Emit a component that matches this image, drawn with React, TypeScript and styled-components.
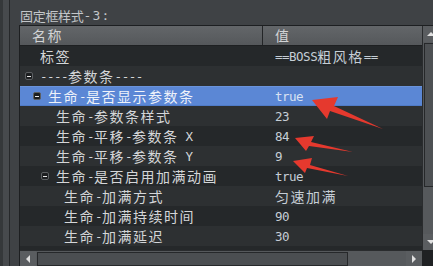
import React from 'react';
import styled, { createGlobalStyle } from 'styled-components';

const Global = createGlobalStyle`
  html, body { margin: 0; padding: 0; background: #3f4245; overflow: hidden; }
  body { font-family: "DejaVu Sans Mono", "Noto Sans CJK SC", monospace; }
`;

const CJK_RE = /([\u2e80-\u9fff\uff00-\uffef]+)/;

const Cjk = styled.span<{ $size: number; $ls: number }>`
  font-family: "Noto Sans CJK SC", sans-serif;
  font-size: ${p => p.$size}px;
  letter-spacing: ${p => p.$ls}px;
`;

const Lat = styled.span<{ $size: number; $ls: number }>`
  font-family: "DejaVu Sans Mono", monospace;
  font-size: ${p => p.$size}px;
  letter-spacing: ${p => p.$ls}px;
  white-space: pre;
`;

type MixedProps = { text: string; cjkSize?: number; cjkLs?: number; latSize?: number; latLs?: number };

function Mixed({ text, cjkSize = 14, cjkLs = 1.5, latSize = 12.5, latLs = -0.5 }: MixedProps) {
  const parts = text.split(CJK_RE).filter(Boolean);
  return (
    <>
      {parts.map((p, i) =>
        CJK_RE.test(p) ? (
          <Cjk key={i} $size={cjkSize} $ls={cjkLs}>{p}</Cjk>
        ) : (
          <Lat key={i} $size={latSize} $ls={latLs}>{p}</Lat>
        )
      )}
    </>
  );
}

const Page = styled.div`
  position: relative;
  display: flex;
  width: 433px;
  height: 266px;
  overflow: hidden;
`;

const LeftStrip = styled.div`
  flex: 0 0 auto;
  width: 6px;
  border-left: 3px solid #35383a;
  border-right: 1px solid #26282a;
  background: #474a4d;
`;

const Main = styled.div`
  flex: 1 1 auto;
  display: flex;
  flex-direction: column;
  padding-left: 9px;
`;

const Title = styled.div`
  height: 28px;
  padding-left: 1px;
  box-sizing: border-box;
  display: flex;
  align-items: center;
  padding-top: 6px;
  color: #c3c6c9;
  white-space: nowrap;
`;

const Table = styled.div`
  width: 418px;
  border: 1px solid #1d1f21;
  display: grid;
  grid-template-columns: 402px 16px;
  grid-template-rows: 20px 204px 16px;
`;

const Header = styled.div`
  grid-column: 1;
  grid-row: 1;
  display: flex;
  height: 20px;
  box-sizing: border-box;
  border-bottom: 1px solid #1e2022;
  background: linear-gradient(#636669, #55585b);
  color: #d2d4d6;
`;

const HeadCell = styled.div<{ $w?: number }>`
  ${p => (p.$w ? `width: ${p.$w}px; border-right: 1px solid #232527;` : 'flex: 1;')}
  box-sizing: border-box;
  padding-left: 12px;
  display: flex;
  align-items: center;
  line-height: 19px;
`;

const Body = styled.div`
  grid-column: 1;
  grid-row: 2;
  overflow: hidden;
`;

const Row = styled.div<{ $alt: boolean; $sel: boolean }>`
  display: flex;
  height: 20px;
  box-sizing: border-box;
  background: ${p => (p.$sel ? '#5b87d5' : p.$alt ? '#2d3032' : '#25282a')};
  ${p => p.$sel && 'border-top: 1px solid #6a93da; border-bottom: 1px solid #4f7bc8;'}
  color: ${p => (p.$sel ? '#eef2fa' : '#d4d6d8')};
  white-space: nowrap;
`;

const NameCell = styled.div<{ $level: number }>`
  width: 242px;
  flex: 0 0 auto;
  box-sizing: border-box;
  padding-left: ${p => 5 + p.$level * 8}px;
  display: flex;
  align-items: center;
  overflow: hidden;
`;

const IconSlot = styled.span`
  width: 15px;
  flex: 0 0 auto;
  display: flex;
  align-items: center;
`;

const Toggle = styled.span`
  position: relative;
  width: 8px;
  height: 8px;
  box-sizing: border-box;
  border: 1px solid #5c5f62;
  border-radius: 2px;
  background: #1c1e20;
  &::after {
    content: '';
    position: absolute;
    left: 1px;
    right: 1px;
    top: 2.5px;
    height: 1px;
    background: #e8e8e8;
  }
`;

const ValueCell = styled.div<{ $sel: boolean }>`
  flex: 1;
  padding-left: 13px;
  display: flex;
  align-items: center;
  color: ${p => (p.$sel ? '#d8e2f2' : '#c6ced6')};
`;

const VScroll = styled.div`
  grid-column: 2;
  grid-row: 1 / span 2;
  border-left: 1px solid #2a2c2e;
  background: #56595c;
  display: flex;
  flex-direction: column;
`;

const ArrowBtn = styled.div<{ $dir: 'up' | 'down' | 'left' | 'right' }>`
  flex: 0 0 auto;
  width: ${p => (p.$dir === 'up' || p.$dir === 'down' ? '100%' : '16px')};
  height: ${p => (p.$dir === 'up' || p.$dir === 'down' ? '16px' : '100%')};
  box-sizing: border-box;
  background: #5a5d60;
  display: flex;
  align-items: center;
  justify-content: center;
  &::before {
    content: '';
    width: 0;
    height: 0;
    ${p =>
      p.$dir === 'up'
        ? 'border-left: 4px solid transparent; border-right: 4px solid transparent; border-bottom: 4px solid #e0e0e0;'
        : p.$dir === 'down'
        ? 'border-left: 4px solid transparent; border-right: 4px solid transparent; border-top: 4px solid #e0e0e0;'
        : p.$dir === 'left'
        ? 'border-top: 4px solid transparent; border-bottom: 4px solid transparent; border-right: 4px solid #e0e0e0;'
        : 'border-top: 4px solid transparent; border-bottom: 4px solid transparent; border-left: 4px solid #e0e0e0;'}
  }
`;

const VTrack = styled.div`
  flex: 1;
  padding: 1px 0 0 1px;
`;

const VThumb = styled.div`
  height: 144px;
  box-sizing: border-box;
  border: 1px solid #26282a;
  background: #4d5053;
`;

const HScroll = styled.div`
  grid-column: 1;
  grid-row: 3;
  display: flex;
  border-top: 1px solid #2a2c2e;
  box-sizing: border-box;
  background: #56595c;
`;

const HTrack = styled.div`
  flex: 1;
  padding: 1px 0 0 1px;
  display: flex;
`;

const HThumb = styled.div`
  width: 311px;
  height: 100%;
  box-sizing: border-box;
  border: 1px solid #26282a;
  background: #4b4e51;
`;

const Corner = styled.div`
  grid-column: 2;
  grid-row: 3;
  background: #1f2123;
`;

const Overlay = styled.svg`
  position: absolute;
  left: 0;
  top: 0;
  pointer-events: none;
`;

type Item = { label: string; value: string; level: number; group?: boolean; sel?: boolean };

const rows: Item[] = [
  { label: '标签', value: '==BOSS粗风格==', level: 0 },
  { label: '----参数条----', value: '', level: 0, group: true },
  { label: '生命-是否显示参数条', value: 'true', level: 1, group: true, sel: true },
  { label: '生命-参数条样式', value: '23', level: 2 },
  { label: '生命-平移-参数条 X', value: '84', level: 2 },
  { label: '生命-平移-参数条 Y', value: '9', level: 2 },
  { label: '生命-是否启用加满动画', value: 'true', level: 2, group: true },
  { label: '生命-加满方式', value: '匀速加满', level: 3 },
  { label: '生命-加满持续时间', value: '90', level: 3 },
  { label: '生命-加满延迟', value: '30', level: 3 },
  { label: '', value: '', level: 3 },
];

export default function App() {
  return (
    <Page>
      <Global />
      <LeftStrip />
      <Main>
        <Title>
          <Mixed text="固定框样式-3:" cjkSize={13} cjkLs={-0.3} latSize={13} latLs={1.2} />
        </Title>
        <Table>
          <Header>
            <HeadCell $w={243}>
              <Mixed text="名称" />
            </HeadCell>
            <HeadCell>
              <Mixed text="值" />
            </HeadCell>
          </Header>
          <Body>
            {rows.map((r, i) => (
              <Row key={i} $alt={i % 2 === 1} $sel={!!r.sel}>
                <NameCell $level={r.level}>
                  {r.group ? (
                    <IconSlot>
                      <Toggle />
                    </IconSlot>
                  ) : (
                    <IconSlot />
                  )}
                  <Mixed text={r.label} />
                </NameCell>
                <ValueCell $sel={!!r.sel}>
                  <Mixed text={r.value} />
                </ValueCell>
              </Row>
            ))}
          </Body>
          <VScroll>
            <ArrowBtn $dir="up" />
            <VTrack>
              <VThumb />
            </VTrack>
            <ArrowBtn $dir="down" />
          </VScroll>
          <HScroll>
            <ArrowBtn $dir="left" />
            <HTrack>
              <HThumb />
            </HTrack>
            <ArrowBtn $dir="right" />
          </HScroll>
          <Corner />
        </Table>
      </Main>
      <Overlay width="433" height="266" viewBox="0 0 433 266">
        <g fill="#e5392e">
          <polygon points="312,100 338,97 334,106 383,129 330,111 327,119" />
          <polygon points="295,138 314,136 311,142 353,152 309,146 306,151" />
          <polygon points="293,161 312,158 310,165 348,176 307,168 305,173" />
        </g>
      </Overlay>
    </Page>
  );
}
